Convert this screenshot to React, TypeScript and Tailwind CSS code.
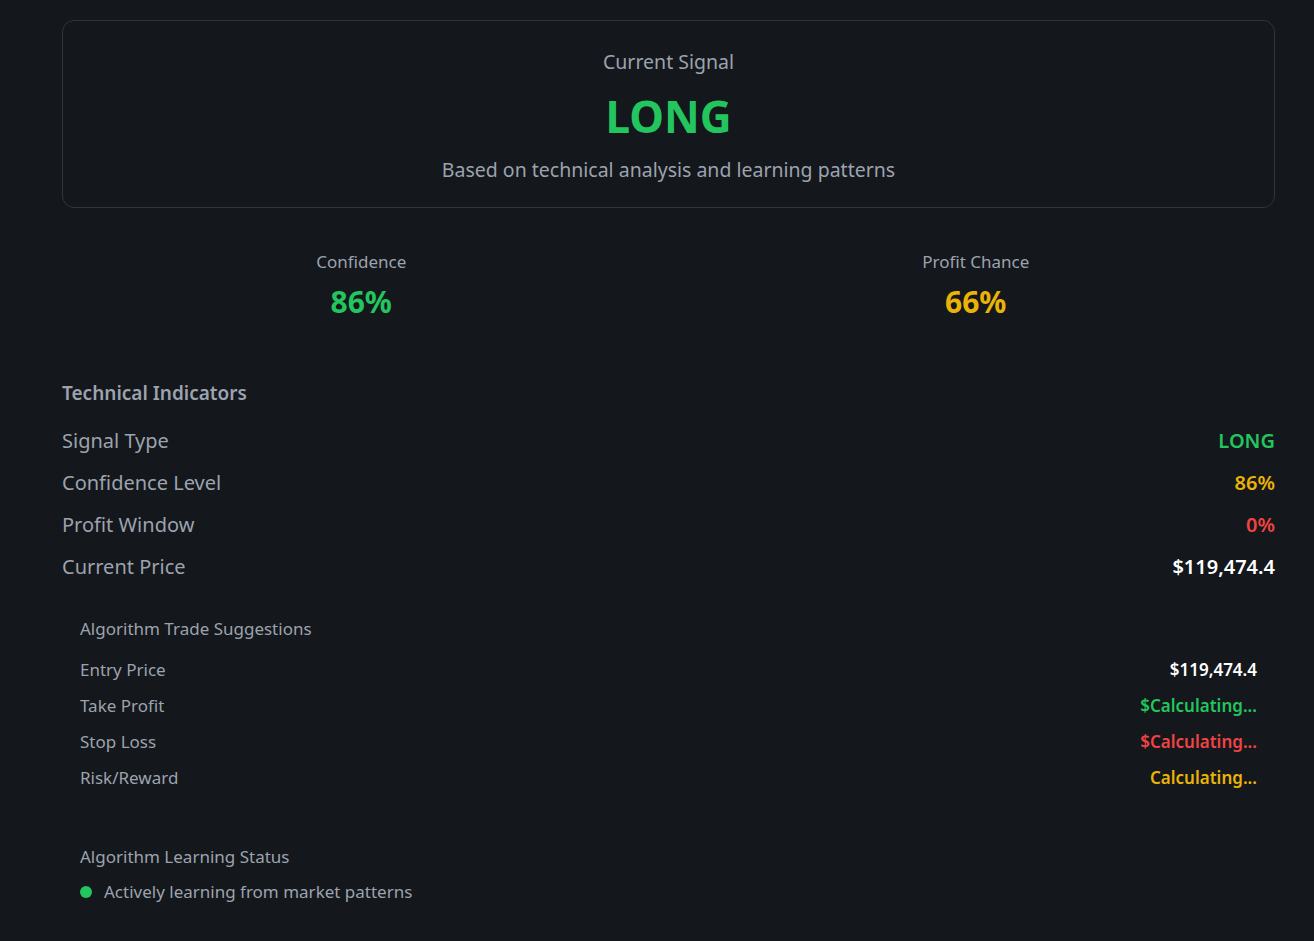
export default function App() {
  const indicators = [
    { label: "Signal Type", value: "LONG", color: "text-[#22c55e]" },
    { label: "Confidence Level", value: "86%", color: "text-[#eab308]" },
    { label: "Profit Window", value: "0%", color: "text-[#ef4444]" },
    { label: "Current Price", value: "$119,474.4", color: "text-white" },
  ];
  const suggestions = [
    { label: "Entry Price", value: "$119,474.4", color: "text-white" },
    { label: "Take Profit", value: "$Calculating...", color: "text-[#22c55e]" },
    { label: "Stop Loss", value: "$Calculating...", color: "text-[#ef4444]" },
    { label: "Risk/Reward", value: "Calculating...", color: "text-[#eab308]" },
  ];

  return (
    <div
      className="min-h-[941px] bg-[#14171b] pl-[62px] pr-[39px] pt-5 pb-6 text-[#9ca3af]"
      style={{ fontFamily: '"Noto Sans", "Open Sans", sans-serif' }}
    >
      <div className="rounded-xl border border-[#30353d] px-6 pt-[27px] pb-[23px] text-center">
        <div className="text-[19.5px] leading-7">Current Signal</div>
        <div className="mt-4 text-[44px] font-bold leading-[48px] text-[#22c55e]">LONG</div>
        <div className="mt-4 text-[19.5px] leading-7">Based on technical analysis and learning patterns</div>
      </div>

      <div className="mt-[42px] grid grid-cols-2 gap-4 text-center">
        <div>
          <div className="text-[17px] leading-6">Confidence</div>
          <div className="mt-[10px] text-3xl font-bold leading-9 text-[#22c55e]">86%</div>
        </div>
        <div>
          <div className="text-[17px] leading-6">Profit Chance</div>
          <div className="mt-[10px] text-3xl font-bold leading-9 text-[#eab308]">66%</div>
        </div>
      </div>

      <div className="mt-[59px]">
        <div className="text-[19px] font-semibold leading-7">Technical Indicators</div>
        <div className="mt-[20px] flex flex-col gap-[14px]">
          {indicators.map((row) => (
            <div key={row.label} className="flex items-center justify-between text-xl leading-7">
              <span>{row.label}</span>
              <span className={`font-semibold ${row.color}`}>{row.value}</span>
            </div>
          ))}
        </div>
      </div>

      <div className="mt-[34px] px-[18px]">
        <div className="text-[17px] leading-7">Algorithm Trade Suggestions</div>
        <div className="mt-[13px] flex flex-col gap-2">
          {suggestions.map((row) => (
            <div key={row.label} className="flex items-center justify-between text-[17px] leading-7">
              <span>{row.label}</span>
              <span className={`font-semibold ${row.color}`}>{row.value}</span>
            </div>
          ))}
        </div>
      </div>

      <div className="mt-[51px] px-[18px]">
        <div className="text-[17px] leading-7">Algorithm Learning Status</div>
        <div className="mt-[7px] flex items-center gap-3 text-[17px] leading-7">
          <span className="h-3 w-3 rounded-full bg-[#22c55e]" />
          <span>Actively learning from market patterns</span>
        </div>
      </div>
    </div>
  );
}
